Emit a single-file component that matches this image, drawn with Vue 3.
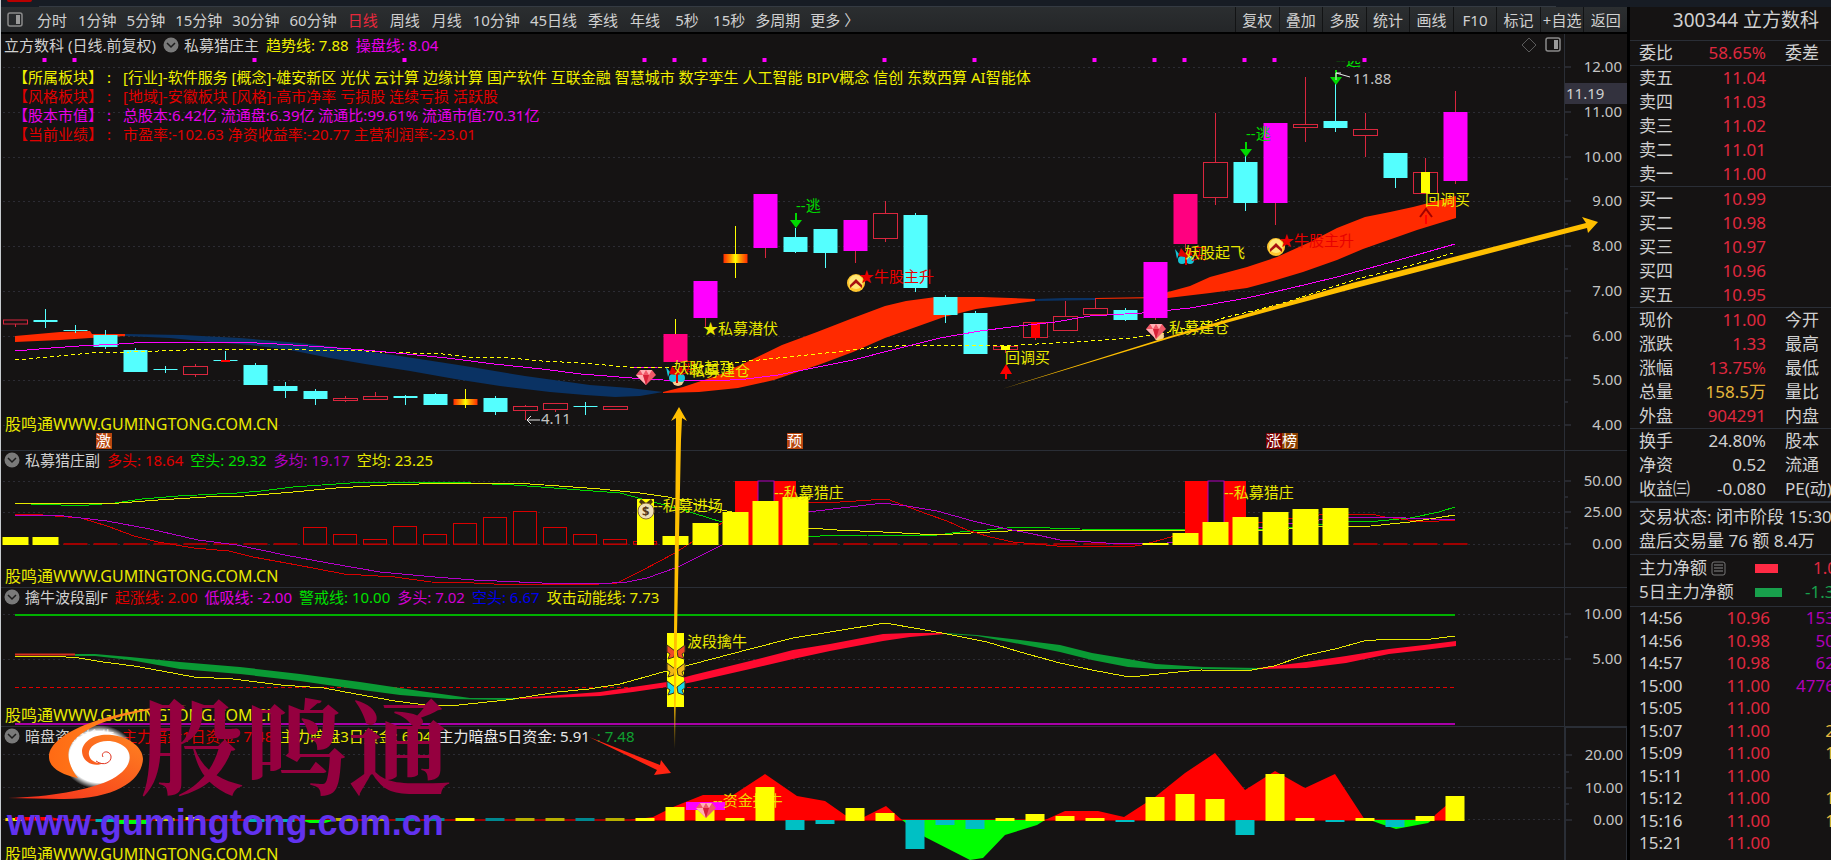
<template>
  <div class="terminal">
    <div class="strip">
      <span class="strip-logo"></span>
      <span class="strip-line"></span>
    </div>
    <div class="body">
      <main class="left">
        <nav class="toolbar">
          <svg class="panel-icon" width="16" height="15" viewBox="0 0 16 15">
            <rect x="1" y="1" width="14" height="13" rx="2" fill="none" stroke="#8a8a8a" stroke-width="1.5" />
            <rect x="9" y="3" width="4" height="9" fill="#9a9a9a" />
          </svg>
          <div class="periods">
            <button
                v-for="p in periods"
                :key="p"
                :class="{ active: p === activePeriod }"
                @click="activePeriod = p"
            >{{ p }}</button>
          </div>
          <div class="tools">
            <button v-for="t in tools" :key="t">{{ t }}</button>
          </div>
        </nav>

        <div class="charts">
          <section v-for="pane in panes" :key="pane.id" class="pane" :class="pane.id">
            <div class="plot">
              <svg class="canvas">
                <g :transform="`translate(-1 ${-pane.top})`">
                  <line v-for="g in pane.grid" :key="g[0]" x1="3" x2="100%" :y1="g[1]" :y2="g[1]" class="grid" />

                  <!-- K line -->
                  <template v-if="pane.id === 'kline'">
                    <linearGradient id="hotBody">
                      <stop offset="0" stop-color="#ff2a00" />
                      <stop offset="0.3" stop-color="#ff9a00" />
                      <stop offset="0.5" stop-color="#ffff00" />
                      <stop offset="0.7" stop-color="#ff9a00" />
                      <stop offset="1" stop-color="#ff2a00" />
                    </linearGradient>
                    <polygon v-for="(r, i) in ribbons" :key="'r' + i" :points="r[1]" :fill="r[0]" />
                    <g v-for="k in candles" :key="'k' + k[0]">
                      <line :x1="cx(k[0])" :x2="cx(k[0])" :y1="k[2]" :y2="k[3]" :stroke="wick(k[1])" />
                      <line :x1="cx(k[0])" :x2="cx(k[0])" :y1="k[4]" :y2="k[5]" :stroke="wick(k[1])" />
                      <rect
                          :x="cx(k[0]) - 12"
                          :y="k[3]"
                          width="24"
                          :height="Math.max(k[4] - k[3], 1)"
                          :fill="bodyFill[k[1]]"
                          :stroke="k[1] === 'r' ? '#d9263e' : 'none'"
                      />
                    </g>
                    <line x1="735.5" x2="735.5" y1="226" y2="278" stroke="#ffff00" />
                    <line x1="465.5" x2="465.5" y1="389" y2="408" stroke="#ffff00" />
                    <line x1="675.5" x2="675.5" y1="319" y2="334" stroke="#ffff00" />
                    <rect x="221" y="360" width="9" height="2" fill="#ff0000" />
                    <rect x="1001" y="346" width="9" height="4" fill="#ffff00" />
                    <rect x="1031" y="322" width="9" height="16" fill="#ff0000" />
                    <rect x="1421" y="172" width="9" height="21" fill="#ffff00" />
                    <polyline class="line" :points="trend" stroke="#ffff00" stroke-dasharray="4 3" />
                    <polyline class="line" :points="control" stroke="#ff00ff" />
                    <rect v-for="d in dots" :key="'d' + d" :x="cx(d) - 3" y="58" width="4" height="4" fill="#ff00ff" />

                    <g v-for="(a, i) in escapes" :key="'e' + i" fill="#00d800">
                      <rect :x="a[0] - 1" :y="a[1]" width="2" height="8" />
                      <path :d="`M${a[0] - 6} ${a[1] + 7}h12l-6 8z`" />
                    </g>
                    <g fill="#ff0000">
                      <path d="M1000 374l6-10 6 10h-5v5h-2v-5z" />
                      <path d="M1425 224v-9h2v9z" />
                    </g>
                    <path d="M1420 217l6-8 6 8" fill="none" stroke="#a00000" stroke-width="2" />
                    <path d="M1336 80v-7l14 4M1336 73l5 0" fill="none" stroke="#e8e8e8" />
                    <path d="M540 420h-13l4-4M527 420l4 4" fill="none" stroke="#e8e8e8" />

                    <g v-for="(c, i) in coins" :key="'c' + i" :transform="`translate(${c[0]} ${c[1]})`">
                      <circle r="9" fill="#ffc62e" />
                      <circle cy="-1" r="7" fill="#ffe878" />
                      <path d="M-6 2L0-4L6 2V5L0 0L-6 5z" fill="#a81010" />
                    </g>
                    <ellipse cx="678" cy="380" rx="6" ry="6" fill="#f7cf92" />
                    <ellipse cx="1159" cy="336" rx="5" ry="5" fill="#f7cf92" />
                    <g v-for="(s, i) in heroes" :key="'s' + i" :transform="`translate(${s[0]} ${s[1]})`">
                      <path d="M-6-2L-10-7L-8 3z" fill="#16c4d6" />
                      <circle cx="-3" cy="4" r="4" fill="#16c4d6" />
                      <circle cx="5" cy="4" r="4" fill="#16c4d6" />
                      <path d="M-7 0L-4-8L0-3L6-8L7-1L2 1V9H0V1z" fill="#e00000" />
                    </g>
                    <text x="680" y="373" fill="#e80000">买</text>
                    <text x="1191" y="259" fill="#e80000">买</text>
                    <clipPath id="cutTop"><rect x="1330" y="61" width="60" height="8" /></clipPath>
                    <text x="1336" y="65" fill="#00e600" clip-path="url(#cutTop)">--逃</text>
                    <g v-for="(t, i) in tags" :key="'t' + i">
                      <rect :x="t[0]" y="433" width="16" height="16" :fill="t[2]" />
                      <text :x="t[0]" y="446" fill="#ffffff">{{ t[1] }}</text>
                    </g>
                  </template>

                  <!-- long / short lines with histogram -->
                  <template v-if="pane.id === 'hunter'">
                    <rect v-for="i in 49" :key="'b' + i" :x="cx(i - 1) - 12" y="543" width="24" height="2" fill="#a00000" />
                    <polyline v-for="(l, i) in hunterLines" :key="'l' + i" class="line" :points="l[1]" :stroke="l[0]" />
                    <rect
                        v-for="b in hollowBars"
                        :key="'h' + b[0]"
                        :x="cx(b[0]) - 12"
                        :y="b[1]"
                        width="23"
                        :height="544 - b[1]"
                        fill="#151313"
                        stroke="#d80000"
                    />
                    <rect x="735" y="481" width="61" height="64" fill="#ff0000" />
                    <rect x="1185" y="481" width="61" height="64" fill="#ff0000" />
                    <rect x="758" y="481" width="16" height="40" fill="#151313" stroke="#b400c0" />
                    <rect x="1208" y="481" width="16" height="50" fill="#151313" stroke="#b400c0" />
                    <rect v-for="b in solidBars" :key="'y' + b[0]" :x="cx(b[0]) - 13" :y="b[1]" width="26" :height="545 - b[1]" fill="#ffff00" />
                    <rect x="637" y="499" width="17" height="46" fill="#ffff00" />
                    <path d="M641 499l5 4 5-4 2 3-4 4h-6l-4-4z" fill="#4a3510" />
                    <circle cx="646" cy="511" r="8" fill="#efe0b8" stroke="#8a6b30" />
                    <text x="642" y="516" class="mini" fill="#5a3a18">$</text>
                  </template>

                  <!-- band strength -->
                  <template v-if="pane.id === 'band'">
                    <line x1="15" x2="1455" y1="615" y2="615" stroke="#00b000" stroke-width="2" />
                    <line x1="15" x2="1455" y1="687.5" y2="687.5" stroke="#e00000" stroke-dasharray="4 3" />
                    <line x1="15" x2="1455" y1="724" y2="724" stroke="#a800a8" stroke-width="2" />
                    <line x1="15" x2="75" y1="654.5" y2="654.5" stroke="#d83020" stroke-width="2" />
                    <polygon v-for="(r, i) in bandRibbons" :key="i" :points="r[1]" :fill="r[0]" />
                    <polyline class="line" :points="momentum" stroke="#e8e800" />
                    <rect x="667" y="633" width="17" height="74" fill="#ffff00" />
                    <g v-for="b in butterflies" :key="b[0]" :transform="`translate(676 ${b[0]})`" :fill="b[1]">
                      <path d="M-1-1L-9-7L-9 0L-6 2L-8 7L-2 5zM1-1L9-7L9 0L6 2L8 7L2 5z" stroke="#40301a" />
                    </g>
                  </template>

                  <!-- hidden capital flow -->
                  <template v-if="pane.id === 'capital'">
                    <line x1="5" x2="1455" y1="820" y2="820" stroke="#a00000" stroke-width="2" />
                    <rect v-for="d in flatBars" :key="'f' + d[0]" :x="cx(d[0]) - 10" :y="d[2]" width="19" height="3" :fill="d[1]" />
                    <polygon v-for="(a, i) in areas" :key="'a' + i" :points="a[1]" :fill="a[0]" />
                    <rect x="686" y="802" width="39" height="8" fill="#ff00ff" />
                    <text x="713" y="806" fill="#f0d800">--资金擒牛</text>
                    <rect
                        v-for="b in flowBars"
                        :key="'w' + b[0]"
                        :x="cx(b[0]) - 10"
                        :y="Math.min(b[1], 820)"
                        width="19"
                        :height="Math.abs(821 - b[1])"
                        :fill="b[1] > 820 ? '#00c0c4' : '#ffff00'"
                    />
                  </template>

                  <g v-for="(g, i) in pane.gems" :key="'g' + i" :transform="`translate(${g[0]} ${g[1]})`">
                    <path d="M-6-7H6L10-2L0 8L-10-2z" fill="#f05868" />
                    <path d="M-6-7L-3-2L0-7L3-2L6-7zM-10-2H-3L0 8z" fill="#ffb0b4" />
                    <path d="M-3-2H3L0 8z" fill="#d82038" />
                  </g>
                  <text
                      v-for="(t, i) in pane.texts"
                      :key="'x' + i"
                      :x="t[0]"
                      :y="t[1] + 5"
                      :fill="t[2]"
                      :class="{ wide: t[3] === site }"
                  >{{ t[3] }}</text>
                </g>
              </svg>

              <header class="pane-head">
                <span v-if="pane.stock" class="stock">{{ pane.stock }}</span>
                <button class="fold" :aria-label="'收起' + pane.title">
                  <svg width="16" height="16" viewBox="0 0 16 16">
                    <circle cx="8" cy="8" r="7.5" fill="#7a7a7a" />
                    <path d="M4 6l4 4 4-4" fill="none" stroke="#1c1c1c" stroke-width="1.5" />
                  </svg>
                </button>
                <span class="title">{{ pane.title }}</span>
                <span v-for="v in pane.values" :key="v[0]" :style="{ color: v[1] }">{{ v[0] }}</span>
                <svg v-if="pane.stock" class="corner" width="39" height="16" viewBox="0 0 39 16">
                  <path d="M7 1l7 7-7 7-7-7z" fill="none" stroke="#5a5a5a" />
                  <rect x="24" y="1" width="14" height="13" rx="2" fill="none" stroke="#8a8a8a" stroke-width="1.5" />
                  <rect x="32" y="3" width="4" height="9" fill="#9a9a9a" />
                </svg>
              </header>

              <dl v-if="pane.id === 'kline'" class="info">
                <div v-for="row in info" :key="row[0]" :style="{ color: row[2] }">
                  <dt>{{ row[0] }}</dt>
                  <dd>{{ row[1] }}</dd>
                </div>
              </dl>
            </div>

            <div class="axis">
              <svg class="canvas">
                <g :transform="`translate(0 ${-pane.top})`">
                  <template v-for="g in pane.grid" :key="g[0]">
                    <line x1="0" x2="6" :y1="g[1]" :y2="g[1]" stroke="#3a3f4a" />
                    <text x="57" :y="g[1] + 5" text-anchor="end" fill="#c4c4c4">{{ g[0] }}</text>
                  </template>
                  <line v-for="m in pane.minor" :key="'m' + m" x1="0" x2="3" :y1="m" :y2="m" stroke="#3a3f4a" />
                </g>
              </svg>
              <span v-if="pane.id === 'kline'" class="last-price">11.19</span>
            </div>
          </section>

          <!-- watermark logo and pointer arrows lie over every pane -->
          <svg class="canvas overlay">
            <defs>
              <linearGradient id="swirlTop" x1="0" x2="1">
                <stop offset="0" stop-color="#ff6a14" />
                <stop offset="1" stop-color="#ff9a24" />
              </linearGradient>
              <linearGradient id="swirlLow" x1="1" x2="0" y1="0" y2="1">
                <stop offset="0" stop-color="#ff8420" />
                <stop offset="1" stop-color="#f42a1c" />
              </linearGradient>
              <radialGradient id="glow">
                <stop offset="0.8" stop-color="#ffffff" />
                <stop offset="1" stop-color="#ffffff" stop-opacity="0" />
              </radialGradient>
              <linearGradient id="tail" x1="0" x2="0" y1="0" y2="1">
                <stop offset="0.85" stop-color="#ffbf00" />
                <stop offset="1" stop-color="#ffbf00" stop-opacity="0" />
              </linearGradient>
            </defs>
            <g transform="translate(-1 -34)">
              <ellipse cx="99" cy="757" rx="37" ry="32" fill="url(#glow)" />
              <path
                  d="M187 705C120 708 49 730 49 757C49 768 62 775 78 778C70 768 66 756 70 747C78 728 118 712 187 705z"
                  fill="url(#swirlTop)"
              />
              <path
                  d="M8 798C50 797 88 790 108 781C134 769 136 750 118 743C102 737 87 746 89 755C90 761 97 764 104 763C94 768 82 762 82 751C83 740 96 733 112 735C130 737 143 748 143 759C142 780 116 800 60 799z"
                  fill="url(#swirlLow)"
              />
              <path d="M96 761C104 767 112 762 111 756C109 749 100 752 103 757" fill="none" stroke="#e03420" />
              <text x="140" y="787" class="brand">股鸣通</text>
              <text x="7" y="835" class="site">www.gumingtong.com.cn</text>

              <polygon points="674,749 674,633 676,440 676,418 671,421 679,407 687,421 682,418 681,440 677,633 675,749" fill="url(#tail)" />
              <polygon points="1002,389 1174,335 1352,283 1586,223 1582,217 1598,222 1588,233 1587,228 1352,289 1174,337" fill="#ffbf00" />
              <polygon points="589,737 660,765 661,760 671,773 654,775 657,770" fill="#ff2412" />
            </g>
          </svg>
        </div>
      </main>

      <aside class="quote">
        <h1>300344 立方数科</h1>
        <table v-for="(group, gi) in quoteGroups" :key="gi" class="quote-table">
          <tbody>
            <tr v-for="r in group" :key="r[0]">
              <th>{{ r[0] }}</th>
              <td :class="r[2]">{{ r[1] }}</td>
              <td class="extra">{{ r[3] }}</td>
            </tr>
          </tbody>
        </table>
        <div class="status">
          <p>交易状态: 闭市阶段 15:30</p>
          <p>盘后交易量 76 额 8.4万</p>
        </div>
        <div class="flow">
          <div>
            <span class="flow-name">主力净额<svg width="15" height="15" viewBox="0 0 15 15">
              <rect x="1" y="1" width="13" height="13" rx="2" fill="none" stroke="#777777" />
              <path d="M3 4h9M3 7h9M3 10h9" stroke="#8a8a8a" />
            </svg></span>
            <i class="bar up"></i><span class="red">1.0</span>
          </div>
          <div>
            <span class="flow-name">5日主力净额</span>
            <i class="bar down"></i><span class="green">-1.3</span>
          </div>
        </div>
        <table class="ticks">
          <tbody>
            <tr v-for="(t, i) in ticks" :key="i">
              <th>{{ t[0] }}</th>
              <td class="red">{{ t[1] }}</td>
              <td :class="t[3]">{{ t[2] }}</td>
            </tr>
          </tbody>
        </table>
      </aside>
    </div>
  </div>
</template>

<script setup>
import { ref } from 'vue';

const activePeriod = ref('日线');
const periods = ['分时', '1分钟', '5分钟', '15分钟', '30分钟', '60分钟', '日线', '周线', '月线', '10分钟', '45日线', '季线', '年线', '5秒', '15秒', '多周期', '更多 〉'];
const tools = ['复权', '叠加', '多股', '统计', '画线', 'F10', '标记', '+自选', '返回'];

const info = [
  ['【所属板块】 :', '[行业]-软件服务 [概念]-雄安新区 光伏 云计算 边缘计算 国产软件 互联金融 智慧城市 数字孪生 人工智能 BIPV概念 信创 东数西算 AI智能体', '#f0f000'],
  ['【风格板块】 :', '[地域]-安徽板块 [风格]-高市净率 亏损股 连续亏损 活跃股', '#e00000'],
  ['【股本市值】 :', '总股本:6.42亿 流通盘:6.39亿 流通比:99.61% 流通市值:70.31亿', '#e800e8'],
  ['【当前业绩】 :', '市盈率:-102.63 净资收益率:-20.77 主营利润率:-23.01', '#e00000']
];

const yellow = '#e8e800';
const site = '股鸣通WWW.GUMINGTONG.COM.CN';

const panes = [
  {
    id: 'kline',
    top: 34,
    stock: '立方数科 (日线.前复权)',
    title: '私募猎庄主',
    values: [['趋势线: 7.88', '#f0f000'], ['操盘线: 8.04', '#e800e8']],
    grid: [['12.00', 67], ['11.00', 112], ['10.00', 157], ['9.00', 201], ['8.00', 246], ['7.00', 291], ['6.00', 336], ['5.00', 380], ['4.00', 425]],
    minor: [135, 179, 224, 269, 313, 358, 402],
    gems: [[646, 377], [1156, 331]],
    texts: [
      [796, 206, '#00d800', '--逃'],
      [1246, 134, '#00d800', '--逃'],
      [1353, 79, '#c4c4c4', '11.88'],
      [541, 419, '#c4c4c4', '4.11'],
      [703, 329, yellow, '★私募潜伏'],
      [859, 277, '#e80000', '★牛股主升'],
      [1279, 241, '#e80000', '★牛股主升'],
      [674, 368, yellow, '妖股起飞'],
      [690, 371, yellow, '私募建仓'],
      [1185, 253, yellow, '妖股起飞'],
      [1169, 328, yellow, '私募建仓'],
      [1005, 358, yellow, '回调买'],
      [1425, 200, yellow, '回调买'],
      [5, 425, yellow, site]
    ]
  },
  {
    id: 'hunter',
    top: 451,
    title: '私募猎庄副',
    values: [['多头: 18.64', '#e00000'], ['空头: 29.32', '#00e000'], ['多均: 19.17', '#b000c0'], ['空均: 23.25', yellow]],
    grid: [['50.00', 481], ['25.00', 512], ['0.00', 544]],
    minor: [497, 528],
    texts: [
      [653, 506, yellow, '--私募进场'],
      [774, 493, yellow, '--私募猎庄'],
      [1224, 493, yellow, '--私募猎庄'],
      [5, 577, yellow, site]
    ]
  },
  {
    id: 'band',
    top: 588,
    title: '擒牛波段副F',
    values: [['起涨线: 2.00', '#e00000'], ['低吸线: -2.00', '#e000e0'], ['警戒线: 10.00', '#00e000'], ['多头: 7.02', '#d000d0'], ['空头: 6.67', '#0000f0'], ['攻击动能线: 7.73', yellow]],
    grid: [['10.00', 614], ['5.00', 659]],
    minor: [637],
    texts: [[687, 642, yellow, '波段擒牛'], [5, 716, yellow, site]]
  },
  {
    id: 'capital',
    top: 727,
    title: '暗盘资金擒牛',
    values: [['主力暗盘1日资金: 7.48', '#e00000'], ['主力暗盘3日资金: 6.04', yellow], ['主力暗盘5日资金: 5.91', '#e8e8e8'], [': 7.48', '#10a030']],
    grid: [['20.00', 754], ['10.00', 787], ['0.00', 819]],
    minor: [771, 803],
    gems: [[706, 810]],
    texts: [[5, 855, yellow, site]]
  }
];

// one bar every 30px
const cx = (i) => 15.5 + i * 30;

const bodyFill = { r: '#151313', c: '#54ffff', m: '#ff00ff', p: '#ff0080', g: 'url(#hotBody)' };
const wick = (type) => (type === 'c' ? '#54ffff' : type === 'g' ? '#ffff00' : '#d9263e');

// [index, type, high, body top, body bottom, low]
const candles = [
  [0, 'r', 320, 320, 324, 327], [1, 'c', 309, 320, 322, 328], [2, 'c', 325, 330, 331, 333],
  [3, 'c', 330, 335, 347, 349], [4, 'c', 348, 350, 372, 372], [5, 'c', 366, 369, 370, 373],
  [6, 'r', 364, 366.5, 374.5, 377], [7, 'c', 351, 360, 361, 361], [8, 'c', 363, 365, 385, 385],
  [9, 'c', 382, 386, 391, 398], [10, 'c', 389, 391, 399, 405], [11, 'r', 396, 398.5, 400.5, 402],
  [12, 'r', 392, 396.5, 399.5, 399], [13, 'c', 395, 396, 398, 405], [14, 'c', 393, 394, 405, 405],
  [15, 'g', 389, 399, 405, 408], [16, 'c', 396, 398, 412, 415], [17, 'r', 405, 406.5, 410.5, 420],
  [18, 'r', 403, 403.5, 409.5, 412], [19, 'c', 402, 406, 407, 415], [20, 'r', 406, 406.5, 409.5, 409],
  [21, 'm', 367, 367, 368, 368], [22, 'p', 334, 334, 362, 362], [23, 'm', 281, 281, 318, 328],
  [24, 'g', 226, 254, 263, 278], [25, 'm', 194, 194, 248, 258], [26, 'c', 228, 237, 252, 253],
  [27, 'c', 229, 229, 253, 268], [28, 'm', 220, 220, 251, 263], [29, 'r', 201, 213.5, 238.5, 242],
  [30, 'c', 213, 215, 288, 292], [31, 'c', 295, 297, 315, 323], [32, 'c', 311, 313, 354, 354],
  [33, 'r', 346, 346.5, 349.5, 353], [34, 'r', 322, 322.5, 337.5, 340], [35, 'r', 301, 316.5, 330.5, 330],
  [36, 'r', 298, 308.5, 314.5, 315], [37, 'c', 308, 310, 320, 321], [38, 'm', 262, 262, 318, 320],
  [39, 'p', 194, 194, 244, 251], [40, 'r', 113, 162.5, 197.5, 205], [41, 'c', 156, 162, 203, 211],
  [42, 'm', 123, 123, 203, 225], [43, 'r', 77, 124.5, 127.5, 142], [44, 'c', 72, 121, 128, 132],
  [45, 'r', 113, 129.5, 135.5, 157], [46, 'c', 153, 153, 178, 188], [47, 'r', 158, 172.5, 193.5, 193],
  [48, 'm', 91, 112, 181, 184]
];

const ribbons = [
  ['#ff2a00', '15,336 60,332 90,331 92,334 125,334 125,336 90,338 60,340 15,342'],
  ['#0a3263', '125,334 183,335 240,338 300,343 345,348 400,356 465,366 525,376 590,385 630,388 663,392 640,396 615,397 585,395 550,392 500,386 455,379 410,371 365,364 330,358 290,350 250,345 210,342 170,338 125,336'],
  ['#ff2a00', '663,392 683,387 719,375 749,361 782,345 817,332 853,318 885,306 906,301 936,297 982,297 1035,299 1035,301 976,309 944,317 885,338 853,352 821,364 774,380 738,388 699,392 663,393'],
  ['#0a3263', '1035,299 1065,298 1095,298 1095,300 1035,301'],
  ['#ff2a00', '1095,298 1155,297 1168,292 1190,286 1210,277 1247,267 1277,257 1310,242 1337,228 1365,217 1390,212 1413,207 1456,196 1456,218 1417,230 1363,249 1337,260 1303,272 1273,281 1247,288 1210,293 1168,298 1095,299']
];

const trend = '15,360 59,356 91,353 130,352 186,350 217,349 293,349 308,350 352,350 380,352 411,353 443,354 467,357 510,358 542,361 581,363 628,367 671,367 705,366 749,361 798,356 845,351 877,347 916,345 1019,345 1074,342 1130,338 1165,333 1210,322 1227,317 1257,310 1287,302 1317,292 1357,279 1397,269 1430,260 1453,253';
const control = '15,351 51,348 79,346 119,344 150,342 237,342 277,344 324,347 364,350 407,354 447,358 494,364 542,369 581,374 632,378 663,380 715,381 746,379 778,375 813,368 853,360 892,350 940,338 980,331 1019,326 1055,322 1090,316 1142,313 1190,308 1247,298 1287,289 1337,277 1370,268 1413,256 1455,244';
const dots = [1, 2, 8, 13, 21, 22, 23, 25, 29, 32, 36, 38, 39, 41, 42, 45];
const escapes = [[796, 213], [1246, 142], [1336, 70]];
const coins = [[856, 283], [1276, 247]];
const heroes = [[676, 374], [1185, 256]];
const tags = [[96, '激', '#b8460f'], [787, '预', '#b8460f'], [1266, '涨', '#780000'], [1282, '榜', '#8c4000']];

const hunterLines = [
  ['#00d800', '15,503 31,504 61,505 89,505 115,503 142,499 178,496 237,493 261,491 293,487 336,484 364,482 449,482 514,485 554,488 593,491 620,493 653,502 680,509 722,522 808,536 820,536 833,535 867,535 910,536 937,535 960,532 987,530 1007,528 1020,527 1080,529 1185,530 1258,530 1317,525 1348,522 1378,521 1410,518 1439,512 1455,507'],
  ['#e8e800', '15,503 59,503 91,504 119,503 158,500 206,497 245,496 293,492 336,488 387,485 451,483 480,483 530,484 573,487 600,489 640,493 668,497 722,510 808,528 837,530 883,532 920,534 953,534 990,532 1027,530 1100,530 1185,530 1258,531 1289,529 1317,527 1371,526 1410,522 1455,515'],
  ['#d80000', '15,514 30,514 55,516 81,518 107,526 134,536 158,542 194,548 229,551 253,557 297,565 344,574 395,577 431,582 474,583 514,585 600,584 617,583 643,570 675,553 692,542 722,523 808,502 840,502 887,499 903,505 927,514 947,521 967,530 990,537 1013,542 1057,546 1100,546 1128,547 1142,545 1171,537 1258,523 1288,519 1319,515 1348,514 1371,514 1385,517 1424,522 1455,520'],
  ['#b400c8', '15,515 55,515 107,521 150,529 198,540 237,545 285,555 328,563 380,572 435,577 474,580 542,583 612,583 627,582 647,578 678,567 722,545 808,512 833,509 883,503 907,506 937,511 973,521 1007,529 1033,534 1060,540 1106,543 1167,543 1258,528 1288,524 1319,520 1348,517 1381,517 1455,520']
];
const hollowBars = [[10, 527.5], [11, 534.5], [12, 539.5], [13, 526.5], [14, 534.5], [15, 523.5], [16, 517.5], [17, 511.5], [18, 527.5], [19, 534.5], [20, 539.5], [21, 541.5]];
const solidBars = [[0, 537], [1, 537], [22, 536], [23, 523], [24, 512], [25, 501], [26, 497], [38, 543], [39, 533], [40, 522], [41, 517], [42, 512], [43, 509], [44, 508]];

const bandRibbons = [
  ['#0a9a34', '75,654 95,654 130,657 180,662 240,667 300,674 360,682 420,691 470,698 515,698 515,700 450,699 400,695 355,689 300,681 240,674 180,669 130,660 95,656 75,656'],
  ['#ff0a30', '520,698 600,692 633,687 667,682 693,675 750,661 793,650 830,644 883,634 910,633 945,633 945,634 910,637 883,641 830,651 793,659 750,669 693,682 667,687 633,692 600,696 520,699'],
  ['#0a9a34', '945,633 977,635 1020,640 1060,645 1092,653 1128,659 1156,664 1203,667 1258,668 1258,670 1203,669 1156,669 1128,667 1092,660 1060,652 1020,644 977,636 945,634'],
  ['#ff0a30', '1258,668 1306,662 1346,656 1389,649 1424,645 1456,641 1456,646 1424,650 1389,654 1346,663 1306,668 1258,669']
];
const momentum = '15,656 53,656 79,658 103,662 134,666 162,671 194,677 233,679 281,685 324,688 356,694 395,701 433,706 459,705 506,700 526,697 557,692 589,689 620,684 663,672 693,664 750,649 793,638 830,632 885,623 920,629 947,634 987,642 1020,652 1060,663 1092,670 1124,676 1140,676 1178,672 1201,670 1246,671 1274,666 1303,656 1335,649 1364,641 1389,639 1431,639 1455,636';
const butterflies = [[652, '#f04a28'], [670, '#f0b818'], [688, '#18d8e8']];

const areas = [
  ['#ff0000', '15,817 50,817 65,820 15,820'],
  ['#00ff00', '118,820 150,820 150,824 118,824'],
  ['#00ff00', '300,820 336,820 325,823 310,823'],
  ['#ff0000', '630,820 653,817 673,807 703,795 733,795 765,774 797,796 825,801 845,815 853,820'],
  ['#ff0000', '858,820 886,806 902,820'],
  ['#00ff00', '902,820 906,823 925,837 970,860 983,858 1005,835 1037,825 1045,820'],
  ['#ff0000', '1045,820 1065,811 1098,811 1124,817 1155,797 1185,773 1215,753 1245,790 1275,771 1305,788 1335,774 1365,820'],
  ['#00ff00', '1370,820 1381,824 1396,829 1428,823 1432,820'],
  ['#ff0000', '1433,820 1435,815 1455,798 1455,820']
];
const flatBars = [
  [0, '#e8e800', 818], [3, '#00b0b0', 819], [5, '#c8c800', 818], [6, '#e8e800', 817], [8, '#00b0b0', 819],
  [9, '#00b0b0', 819], [11, '#b8b000', 818], [12, '#b8b000', 818], [13, '#008890', 818], [14, '#008890', 818],
  [15, '#ffff00', 818], [16, '#008890', 818], [17, '#b8b000', 818], [18, '#b8b000', 818], [19, '#008890', 818], [20, '#b8b000', 818]
];
const flowBars = [
  [21, 818], [22, 807], [23, 810], [24, 818], [25, 787], [26, 831], [27, 825], [28, 808], [29, 813], [30, 850],
  [31, 826], [32, 830], [33, 818], [34, 814], [35, 816], [36, 818], [37, 823], [38, 797], [39, 794], [40, 799],
  [41, 836], [42, 774], [43, 818], [44, 823], [45, 818], [46, 828], [47, 816], [48, 796]
];

const quoteGroups = [
  [['委比', '58.65%', 'red', '委差']],
  [['卖五', '11.04', 'red'], ['卖四', '11.03', 'red'], ['卖三', '11.02', 'red'], ['卖二', '11.01', 'red'], ['卖一', '11.00', 'red']],
  [['买一', '10.99', 'red'], ['买二', '10.98', 'red'], ['买三', '10.97', 'red'], ['买四', '10.96', 'red'], ['买五', '10.95', 'red']],
  [['现价', '11.00', 'red', '今开'], ['涨跌', '1.33', 'red', '最高'], ['涨幅', '13.75%', 'red', '最低'], ['总量', '158.5万', 'gold', '量比'], ['外盘', '904291', 'red', '内盘']],
  [['换手', '24.80%', '', '股本'], ['净资', '0.52', '', '流通'], ['收益㈢', '-0.080', '', 'PE(动)']]
];

const ticks = [
  ['14:56', '10.96', '153', 'purple'],
  ['14:56', '10.98', '50', 'purple'],
  ['14:57', '10.98', '62', 'purple'],
  ['15:00', '11.00', '4776', 'purple'],
  ['15:05', '11.00', ''],
  ['15:07', '11.00', '2', 'gold'],
  ['15:09', '11.00', '1', 'gold'],
  ['15:11', '11.00', ''],
  ['15:12', '11.00', '1', 'gold'],
  ['15:16', '11.00', '1', 'gold'],
  ['15:21', '11.00', ''],
  ['15:24', '11.00', '']
];
</script>

<style>
body {
  background: #000000;
}
</style>

<style scoped>
.terminal {
  display: flex;
  flex-direction: column;
  height: 100vh;
  overflow: hidden;
  box-sizing: border-box;
  border-left: 1px solid #c8ccd0;
  background: #000000;
  color: #d0d0d0;
  font-family: "Noto Sans", "Noto Sans CJK SC", sans-serif;
  font-size: 15px;
}

button {
  padding: 0;
  border: 0;
  background: none;
  color: inherit;
  font: inherit;
  white-space: nowrap;
  cursor: pointer;
}

/* bottom edge of the menu bar */
.strip {
  position: relative;
  height: 7px;
  flex: none;
  background: #171c24;
}

.strip-logo {
  position: absolute;
  left: 6px;
  top: 0;
  width: 25px;
  height: 2px;
  background: #b80000;
  border-radius: 0 0 3px 3px;
}

.strip-line {
  position: absolute;
  left: 38px;
  right: 275px;
  bottom: 0;
  height: 1px;
  background: #343a42;
}

.body {
  display: flex;
  flex: 1;
  min-height: 0;
}

.left {
  display: flex;
  flex-direction: column;
  flex: 1;
  min-width: 0;
}

.toolbar {
  display: flex;
  align-items: center;
  height: 25px;
  flex: none;
  margin-bottom: 2px;
  line-height: 22px;
  background: linear-gradient(#2b2e30, #242628);
}

.panel-icon {
  flex: none;
  margin-left: 6px;
}

.periods {
  display: flex;
  flex: 1;
  min-width: 0;
  overflow: hidden;
  margin-left: 8px;
}

.periods button {
  flex: none;
  min-width: 42px;
  padding: 0 5px;
}

.periods .active {
  color: #e8283c;
}

.tools {
  display: grid;
  grid-template-columns: repeat(9, 1fr);
  width: 392px;
  height: 100%;
}

.tools button {
  border-left: 1px solid #121314;
}

.charts {
  position: relative;
  display: flex;
  flex-direction: column;
  flex: 1;
  min-height: 0;
  background: #151313;
}

.pane {
  display: flex;
  flex: none;
  border-bottom: 1px solid #2a2e36;
}

.kline {
  height: 416px;
}

.hunter {
  height: 136px;
}

.band {
  height: 138px;
}

.capital {
  flex: 1;
  min-height: 0;
  border-bottom: 0;
}

.plot {
  position: relative;
  flex: 1;
  min-width: 0;
}

.axis {
  position: relative;
  width: 62px;
  border-left: 1px solid #2a2e36;
}

.capital .axis {
  width: 60px;
  border: 2px solid #2a2e36;
  border-width: 1px 1px 0 2px;
}

.canvas {
  position: absolute;
  inset: 0;
  width: 100%;
  height: 100%;
  overflow: hidden;
}

.overlay {
  pointer-events: none;
}

.grid {
  stroke: #2c2c34;
  stroke-dasharray: 2 3;
  shape-rendering: crispEdges;
}

.line {
  fill: none;
  stroke-width: 1;
  shape-rendering: crispEdges;
}

.wide {
  font-size: 16px;
}

.mini {
  font-size: 13px;
  font-weight: bold;
}

.brand {
  fill: #95003f;
  font-size: 104px;
  font-weight: bold;
  font-family: "Noto Serif CJK SC", "Noto Sans CJK SC", serif;
}

.site {
  fill: #6232ef;
  font-size: 36px;
  font-weight: bold;
  font-family: "Liberation Sans", sans-serif;
}

.pane-head {
  position: relative;
  display: flex;
  align-items: center;
  gap: 7px;
  height: 18px;
  padding-left: 3px;
  line-height: 18px;
  white-space: nowrap;
}

.kline .pane-head {
  height: 22px;
}

.fold {
  display: flex;
}

.title {
  margin-left: -2px;
}

.corner {
  margin-left: auto;
  margin-right: 3px;
}

.info {
  position: relative;
  margin: 12px 0 0 12px;
  line-height: 19px;
  white-space: nowrap;
}

.info div {
  display: flex;
}

.info dt {
  width: 110px;
}

.info dd {
  margin: 0;
}

.last-price {
  position: absolute;
  top: 49px;
  left: 0;
  right: 0;
  height: 21px;
  line-height: 20px;
  padding-left: 1px;
  background: #33323e;
}

.quote {
  width: 201px;
  flex: none;
  margin-left: 3px;
  overflow: hidden;
  background: #151313;
  font-size: 17px;
  white-space: nowrap;
}

.quote h1 {
  margin: 0;
  padding-right: 12px;
  font-size: 19px;
  font-weight: normal;
  line-height: 26px;
  height: 33px;
  text-align: right;
}

.quote-table,
.ticks {
  width: 260px;
  table-layout: fixed;
  border-spacing: 0;
  border-top: 1px solid #2a2e36;
}

.quote-table tr {
  height: 24px;
}

.quote th,
.quote td {
  padding: 0;
  line-height: 22px;
  font-weight: normal;
  text-align: right;
}

.quote th {
  width: 61px;
  padding-left: 9px;
  text-align: left;
}

.quote-table td {
  width: 66px;
}

.quote-table .extra {
  width: auto;
  padding-left: 19px;
  text-align: left;
}

.status,
.flow {
  padding: 1px 0 1px 9px;
  border-top: 1px solid #2a2e36;
  line-height: 24px;
}

.status {
  padding-top: 2px;
  border-top-width: 2px;
}

.status p {
  margin: 0;
}

.flow {
  padding-bottom: 2px;
}

.flow div {
  display: flex;
  align-items: center;
}

.flow-name {
  display: flex;
  align-items: center;
  flex: none;
  gap: 4px;
  width: 116px;
}

.bar {
  flex: none;
  height: 9px;
  margin-right: 35px;
}

.bar.up {
  width: 23px;
  background: #ff2a44;
}

.bar.down {
  width: 27px;
  margin-right: 23px;
  background: #18a04c;
}

.ticks {
  width: 205px;
}

.ticks tr {
  height: 22px;
}

.ticks tr:nth-child(even) {
  height: 23px;
}

.ticks td {
  width: 70px;
}

.ticks td:last-child {
  width: auto;
}

.red {
  color: #e0283f;
}

.green {
  color: #18a04c;
}

.gold {
  color: #e6b83c;
}

.purple {
  color: #b000b8;
}
</style>
